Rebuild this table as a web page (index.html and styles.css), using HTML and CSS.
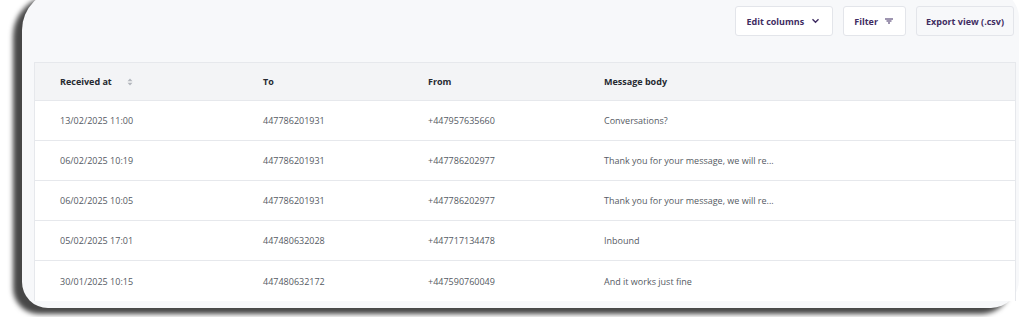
FILE: index.html
```html
<!DOCTYPE html>
<html lang="en">
<head>
    <meta charset="UTF-8">
    <title>Inbound messages</title>
    <link rel="stylesheet" href="styles.css">
</head>
<body>
    <div class="card">
        <div class="toolbar">
            <button class="btn">Edit columns
                <svg width="9" height="6" viewBox="0 0 9 6"><path d="M1.5 1.2l3 3 3-3" fill="none" stroke="#3f2d62" stroke-width="1.4"/></svg>
            </button>
            <button class="btn">Filter
                <svg width="8" height="6" viewBox="0 0 8 6"><path d="M0 1h8M1.5 3h5M3 5h2" stroke="#3f2d62" stroke-width="1.1"/></svg>
            </button>
            <button class="btn btn-grey">Export view (.csv)</button>
        </div>

        <div class="table">
            <div class="row head">
                <div class="cell">Received at
                    <svg class="sort" width="6" height="8" viewBox="0 0 6 8"><path d="M3 0.5L5.5 3.2H0.5zM3 7.5L0.5 4.8H5.5z" fill="#b3b6bd"/></svg>
                </div>
                <div class="cell">To</div>
                <div class="cell">From</div>
                <div class="cell">Message body</div>
            </div>
            <div class="row">
                <div class="cell">13/02/2025 11:00</div>
                <div class="cell">447786201931</div>
                <div class="cell">+447957635660</div>
                <div class="cell">Conversations?</div>
            </div>
            <div class="row">
                <div class="cell">06/02/2025 10:19</div>
                <div class="cell">447786201931</div>
                <div class="cell">+447786202977</div>
                <div class="cell">Thank you for your message, we will re...</div>
            </div>
            <div class="row">
                <div class="cell">06/02/2025 10:05</div>
                <div class="cell">447786201931</div>
                <div class="cell">+447786202977</div>
                <div class="cell">Thank you for your message, we will re...</div>
            </div>
            <div class="row">
                <div class="cell">05/02/2025 17:01</div>
                <div class="cell">447480632028</div>
                <div class="cell">+447717134478</div>
                <div class="cell">Inbound</div>
            </div>
            <div class="row last">
                <div class="cell">30/01/2025 10:15</div>
                <div class="cell">447480632172</div>
                <div class="cell">+447590760049</div>
                <div class="cell">And it works just fine</div>
            </div>
        </div>
    </div>
</body>
</html>
```

FILE: styles.css
```css
html, body {
    margin: 0;
    height: 100%;
    overflow: hidden;
}
body {
    background-color: #fff;
    font-family: "Open Sans", "Noto Sans", sans-serif;
}
.card {
    margin: -10px 0 0 22px;
    width: 997px;
    height: 318px;
    box-sizing: border-box;
    padding: 16px 5px 0 12px;
    background-color: #f7f8fa;
    border-radius: 40px 28px 28px 26px;
    box-shadow: -9px 6px 5px rgba(0, 0, 0, 0.72);
}
.toolbar {
    display: flex;
    justify-content: flex-end;
    gap: 10px;
    height: 30px;
}
.btn {
    display: flex;
    align-items: center;
    gap: 7px;
    height: 30px;
    padding: 0 12px 0 10px;
    border: 1px solid #e3e5ea;
    border-radius: 3px;
    background-color: #fff;
    color: #3f2d62;
    font-family: inherit;
    font-size: 9px;
    font-weight: 700;
    white-space: nowrap;
}
.btn svg {
    flex-shrink: 0;
}
.btn-grey {
    width: 98px;
    justify-content: center;
    padding: 0;
    background-color: #f7f8fa;
}
.table {
    margin-top: 26px;
    width: 980px;
    border: 1px solid #e6e8ec;
    border-bottom: none;
    background-color: #fff;
}
.row {
    display: grid;
    grid-template-columns: 203px 165px 176px 1fr;
    height: 40px;
    align-items: center;
    border-bottom: 1px solid #e6e8ec;
    box-sizing: border-box;
    font-size: 9px;
    color: #555a63;
}
.row.head {
    height: 38px;
    background-color: #f3f4f6;
    color: #262a31;
    font-weight: 700;
}
.row.last {
    border-bottom: none;
}
.cell {
    padding-left: 25px;
    display: flex;
    align-items: center;
}
.sort {
    margin-left: 15px;
}
```
